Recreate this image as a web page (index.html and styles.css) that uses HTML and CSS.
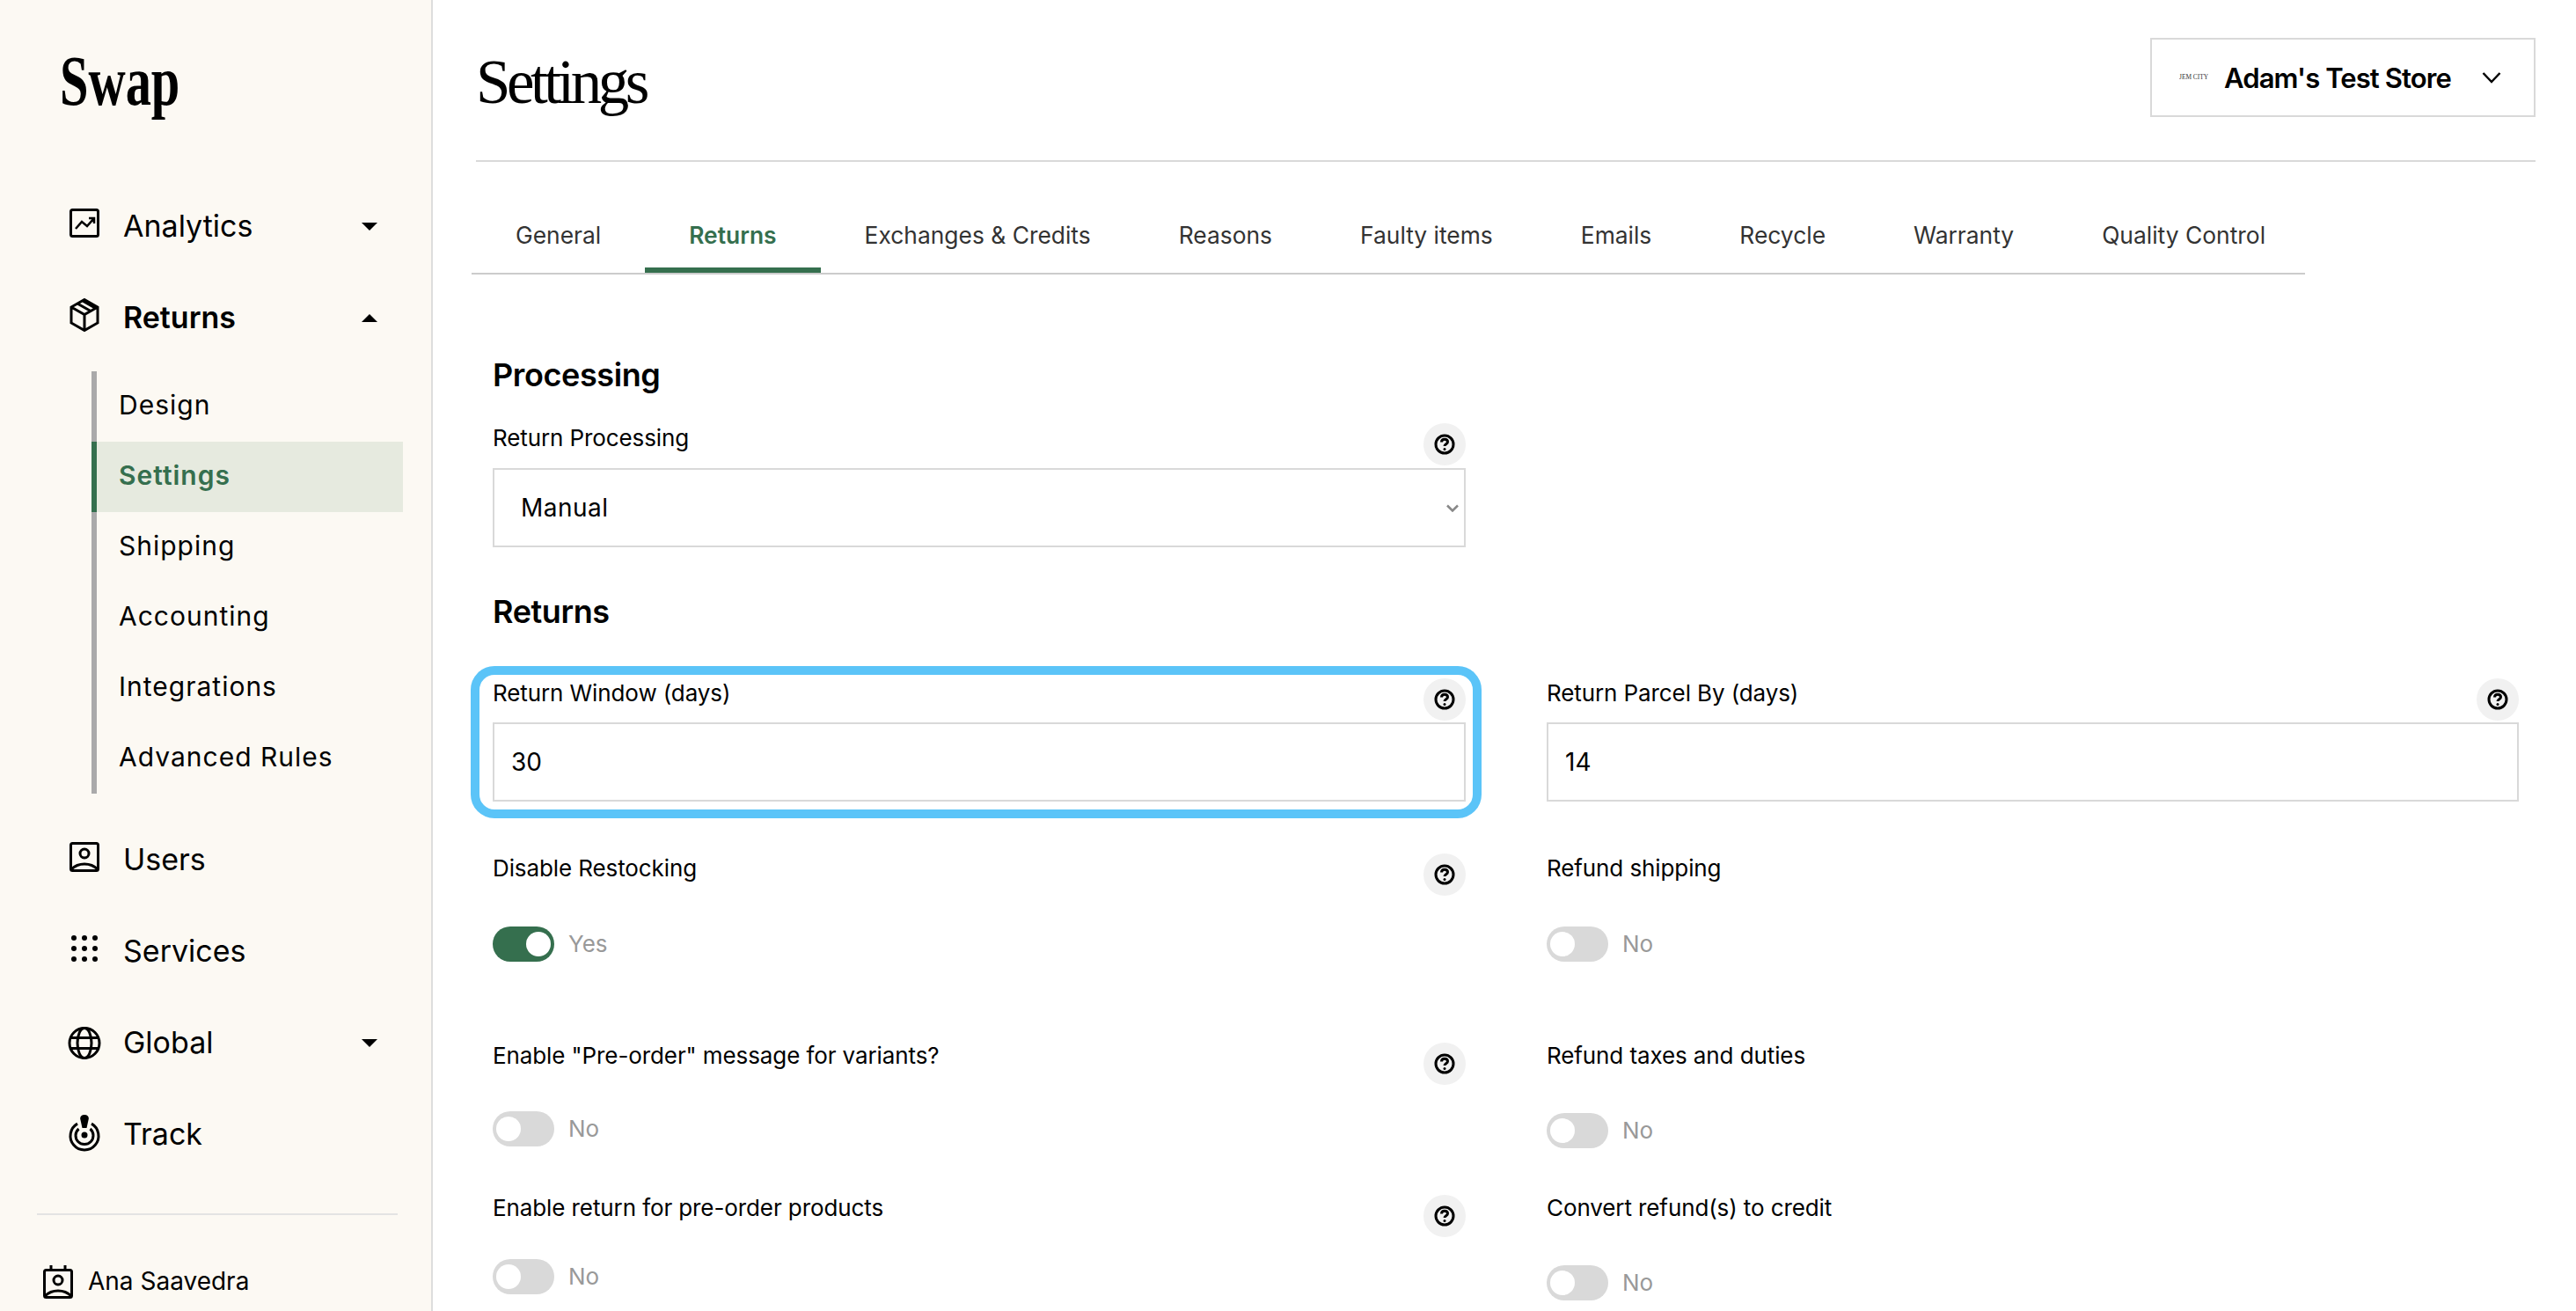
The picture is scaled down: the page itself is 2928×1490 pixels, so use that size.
FILE: index.html
```html
<!DOCTYPE html>
<html lang="en">
<head>
<meta charset="utf-8">
<title>Swap Settings</title>
<link rel="stylesheet" href="styles.css">
</head>
<body>
<div class="app">
  <aside class="sidebar">
    <div class="logo"><span>Swap</span></div>
    <nav class="nav">
      <a class="nav-item">
        <svg class="nav-icon" viewBox="0 0 40 44"><rect x="4.500" y="3.500" width="31" height="30" rx="2"/><path class="thin" d="M10 25l7-8 6 5 8-9M25 13h6v6"/></svg>
        <span class="nav-label">Analytics</span><span class="caret down"></span>
      </a>
      <a class="nav-item">
        <svg class="nav-icon" viewBox="0 0 40 44"><path d="M20 1.500l15 8.500v18l-15 8.500-15-8.500v-18zM5 10l15 8.500 15-8.500M20 18.500v18M12 6l15 8.500M18 3l14 8"/></svg>
        <span class="nav-label strong">Returns</span><span class="caret up"></span>
      </a>
      <div class="subnav">
        <a class="sub-item">Design</a>
        <a class="sub-item active">Settings</a>
        <a class="sub-item">Shipping</a>
        <a class="sub-item">Accounting</a>
        <a class="sub-item">Integrations</a>
        <a class="sub-item">Advanced Rules</a>
      </div>
      <a class="nav-item after-sub">
        <svg class="nav-icon" viewBox="0 0 40 44"><rect x="4.500" y="3.500" width="31" height="31" rx="2"/><circle cx="20" cy="15" r="5"/><path d="M5 33c4-4 9-6 15-6s11 2 15 6"/></svg>
        <span class="nav-label">Users</span>
      </a>
      <a class="nav-item">
        <svg class="nav-icon" viewBox="0 0 40 44"><g class="dots"><circle cx="8" cy="7" r="3"/><circle cx="20" cy="7" r="3"/><circle cx="32" cy="7" r="3"/><circle cx="8" cy="19" r="3"/><circle cx="20" cy="19" r="3"/><circle cx="32" cy="19" r="3"/><circle cx="8" cy="31" r="3"/><circle cx="20" cy="31" r="3"/><circle cx="32" cy="31" r="3"/></g></svg>
        <span class="nav-label">Services</span>
      </a>
      <a class="nav-item">
        <svg class="nav-icon" viewBox="0 0 40 44"><circle cx="20" cy="22.500" r="17"/><ellipse cx="20" cy="22.500" rx="8" ry="17"/><path d="M3.500 16.500h33M3.500 28.500h33"/></svg>
        <span class="nav-label">Global</span><span class="caret down"></span>
      </a>
      <a class="nav-item">
        <svg class="nav-icon" viewBox="0 0 40 44"><path d="M12 10.100A16 16 0 1 0 28 10.100M13.500 16A10 10 0 1 0 26.500 16"/><path class="solid" d="M20 0c3.500 0 5 2 4.800 4.500L22.500 15h-5L15.200 4.500C15 2 16.500 0 20 0z"/><circle class="solid" cx="20" cy="23" r="3.500"/></svg>
        <span class="nav-label">Track</span>
      </a>
    </nav>
    <div class="account">
      <svg class="account-icon" viewBox="0 0 40 44"><path d="M12 4v6M28 4v6"/><rect x="4.500" y="9.500" width="31" height="31" rx="2"/><circle cx="20" cy="21" r="5"/><path d="M5 39c4-4 9-6 15-6s11 2 15 6"/></svg>
      <span>Ana Saavedra</span>
    </div>
  </aside>

  <main class="main">
    <header class="header">
      <h1 class="title">Settings</h1>
      <div class="store">
        <span class="store-logo">JEM CITY</span>
        <span class="store-name">Adam's Test Store</span>
        <svg class="store-chevron" viewBox="0 0 22 14"><path d="M1.500 2l9.500 10 9.500-10"/></svg>
      </div>
    </header>

    <div class="tabs">
      <a class="tab">General</a>
      <a class="tab active">Returns</a>
      <a class="tab">Exchanges &amp; Credits</a>
      <a class="tab">Reasons</a>
      <a class="tab">Faulty items</a>
      <a class="tab">Emails</a>
      <a class="tab">Recycle</a>
      <a class="tab">Warranty</a>
      <a class="tab">Quality Control</a>
    </div>

    <form class="form">
      <h2 class="section first">Processing</h2>
      <div class="grid single">
        <div class="field">
          <div class="field-head">
            <label class="label">Return Processing</label>
            <span class="help"><svg viewBox="0 0 24 24"><circle cx="12" cy="12" r="10"/><path d="M8.500 9.500c0-2 1.500-3.200 3.500-3.200s3.500 1.200 3.500 3c0 2.500-3.500 2.500-3.500 4.700"/><circle class="solid" cx="12" cy="17.500" r="1.500"/></svg></span>
          </div>
          <div class="select-wrap">
            <select class="select"><option>Manual</option></select>
            <svg class="select-chevron" viewBox="0 0 14 9"><path d="M1 1.500l6 6 6-6"/></svg>
          </div>
        </div>
      </div>

      <h2 class="section">Returns</h2>
      <div class="grid">
        <div class="field">
          <div class="field-head">
            <label class="label">Return Window (days)</label>
            <span class="help"><svg viewBox="0 0 24 24"><circle cx="12" cy="12" r="10"/><path d="M8.500 9.500c0-2 1.500-3.200 3.500-3.200s3.500 1.200 3.500 3c0 2.500-3.500 2.500-3.500 4.700"/><circle class="solid" cx="12" cy="17.500" r="1.500"/></svg></span>
          </div>
          <input class="input" value="30">
          <div class="highlight"></div>
        </div>
        <div class="field">
          <div class="field-head">
            <label class="label">Return Parcel By (days)</label>
            <span class="help"><svg viewBox="0 0 24 24"><circle cx="12" cy="12" r="10"/><path d="M8.500 9.500c0-2 1.500-3.200 3.500-3.200s3.500 1.200 3.500 3c0 2.500-3.500 2.500-3.500 4.700"/><circle class="solid" cx="12" cy="17.500" r="1.500"/></svg></span>
          </div>
          <input class="input" value="14">
        </div>

        <div class="field">
          <div class="field-head">
            <label class="label">Disable Restocking</label>
            <span class="help"><svg viewBox="0 0 24 24"><circle cx="12" cy="12" r="10"/><path d="M8.500 9.500c0-2 1.500-3.200 3.500-3.200s3.500 1.200 3.500 3c0 2.500-3.500 2.500-3.500 4.700"/><circle class="solid" cx="12" cy="17.500" r="1.500"/></svg></span>
          </div>
          <div class="toggle-row"><span class="toggle on"><span class="knob"></span></span><span class="toggle-text">Yes</span></div>
        </div>
        <div class="field">
          <div class="field-head"><label class="label">Refund shipping</label></div>
          <div class="toggle-row"><span class="toggle"><span class="knob"></span></span><span class="toggle-text">No</span></div>
        </div>

        <div class="field">
          <div class="field-head">
            <label class="label">Enable "Pre-order" message for variants?</label>
            <span class="help low"><svg viewBox="0 0 24 24"><circle cx="12" cy="12" r="10"/><path d="M8.500 9.500c0-2 1.500-3.200 3.500-3.200s3.500 1.200 3.500 3c0 2.500-3.500 2.500-3.500 4.700"/><circle class="solid" cx="12" cy="17.500" r="1.500"/></svg></span>
          </div>
          <div class="toggle-row gap-30"><span class="toggle"><span class="knob"></span></span><span class="toggle-text">No</span></div>
        </div>
        <div class="field">
          <div class="field-head"><label class="label">Refund taxes and duties</label></div>
          <div class="toggle-row gap-32"><span class="toggle"><span class="knob"></span></span><span class="toggle-text">No</span></div>
        </div>

        <div class="field">
          <div class="field-head">
            <label class="label">Enable return for pre-order products</label>
            <span class="help low"><svg viewBox="0 0 24 24"><circle cx="12" cy="12" r="10"/><path d="M8.500 9.500c0-2 1.500-3.200 3.500-3.200s3.500 1.200 3.500 3c0 2.500-3.500 2.500-3.500 4.700"/><circle class="solid" cx="12" cy="17.500" r="1.500"/></svg></span>
          </div>
          <div class="toggle-row gap-25"><span class="toggle"><span class="knob"></span></span><span class="toggle-text">No</span></div>
        </div>
        <div class="field">
          <div class="field-head"><label class="label">Convert refund(s) to credit</label></div>
          <div class="toggle-row gap-32"><span class="toggle"><span class="knob"></span></span><span class="toggle-text">No</span></div>
        </div>
      </div>
    </form>
  </main>
</div>
</body>
</html>
```

FILE: styles.css
```css
* { box-sizing: border-box; }
html, body { margin: 0; height: 100%; }
body {
  font-family: Inter, "Liberation Sans", sans-serif;
  color: #000;
  background: #fff;
  overflow: hidden;
}
svg { display: block; fill: none; stroke: #000; stroke-width: 3; }
svg .solid { fill: #000; stroke: none; }
svg .thin { stroke-width: 2.500; }
svg .dots circle { fill: #000; stroke: none; }

.app { display: flex; height: 1490px; overflow: hidden; }

/* Sidebar */
.sidebar {
  width: 492px;
  flex: none;
  background: #fcf9f3;
  border-right: 2px solid #ddd;
  display: flex;
  flex-direction: column;
  height: 1490px;
}
.logo {
  height: 205px;
  padding: 46px 0 0 68px;
  font-family: "Liberation Serif", serif;
  font-size: 80px;
  line-height: 92px;
  font-weight: 700;
}
.logo span { display: inline-block; transform: scaleX(.73); transform-origin: left center; }
.nav { display: flex; flex-direction: column; }
.nav-item {
  display: flex;
  align-items: center;
  height: 104px;
  padding: 0 61px 0 76px;
}
.nav-icon { width: 40px; height: 44px; margin-right: 24px; flex: none; }
.nav-label { flex: 1; font-size: 34px; line-height: 44px; }
.nav-label.strong { font-weight: 600; }
.caret { width: 0; height: 0; border-left: 9px solid transparent; border-right: 9px solid transparent; }
.caret.down { border-top: 9px solid #000; }
.caret.up { border-bottom: 9px solid #000; }
.subnav {
  margin: 9px 0 0 104px;
  width: 354px;
  height: 480px;
  border-left: 6px solid #aaa;
}
.sub-item {
  display: flex;
  align-items: center;
  height: 80px;
  padding: 0 0 4px 25px;
  margin-left: -6px;
  border-left: 6px solid transparent;
  font-size: 30px;
  letter-spacing: 1px;
}
.sub-item.active {
  background: #e6eadf;
  border-left-color: #356f4e;
  color: #356f4e;
  font-weight: 600;
}
.after-sub { margin-top: 23px; }
.account {
  margin: 38px 0 0 42px;
  width: 410px;
  border-top: 2px solid #e3e3e3;
  padding: 53px 0 0 4px;
  display: flex;
  align-items: center;
  font-size: 28px;
  line-height: 40px;
}
.account-icon { width: 40px; height: 44px; margin-right: 14px; flex: none; }

/* Main */
.main { flex: 1; padding: 0 46px 0 44px; min-width: 0; }
.header {
  display: flex;
  justify-content: space-between;
  align-items: flex-start;
  margin-left: 5px;
  height: 184px;
  padding-top: 43px;
  border-bottom: 2px solid #d9d9d9;
}
.title {
  margin: 12px 0 0;
  font-family: "Liberation Serif", serif;
  font-weight: 400;
  font-size: 71px;
  line-height: 76px;
  letter-spacing: -4.500px;
}
.store {
  width: 438px;
  height: 90px;
  border: 2px solid #d9d9d9;
  display: flex;
  align-items: center;
  padding-left: 31px;
}
.store-logo {
  width: 33px;
  margin-right: 18px;
  font-family: "Liberation Serif", serif;
  font-size: 7.400px;
  line-height: 10px;
  color: #333;
  white-space: nowrap;
  overflow: hidden;
}
.store-name { font-size: 31px; font-weight: 600; letter-spacing: -.9px; white-space: nowrap; flex: 1; }
.store-chevron { width: 22px; height: 14px; margin-right: 37px; stroke-width: 2.500; flex: none; }

.tabs {
  display: flex;
  width: 2084px;
  padding-top: 40px;
  border-bottom: 2px solid #ccc;
}
.tab {
  padding: 26px 50px 20px;
  border-bottom: 6px solid transparent;
  font-size: 26.400px;
  line-height: 34px;
  color: #333;
  white-space: nowrap;
}
.tab.active { border-bottom-color: #356f4e; color: #356f4e; font-weight: 600; }

.form { padding-left: 24px; }
.section {
  margin: 49px 0 52px;
  font-size: 36px;
  line-height: 48px;
  font-weight: 600;
  letter-spacing: -.4px;
}
.section.first { margin: 90px 0 31px; }
.grid {
  display: grid;
  grid-template-columns: 1106px 1105px;
  grid-template-rows: 199px 213px 173px auto;
  column-gap: 92px;
}
.grid.single { display: block; width: 1106px; }
.field { position: relative; min-width: 0; }
.field-head {
  display: flex;
  justify-content: space-between;
  align-items: flex-start;
  height: 50px;
}
.label { font-size: 26px; line-height: 34px; letter-spacing: -.1px; white-space: nowrap; }
.help {
  width: 48px;
  height: 48px;
  border-radius: 50%;
  background: #f1f1f1;
  display: flex;
  align-items: center;
  justify-content: center;
  flex: none;
}
.help.low { margin-top: 2px; }
.help svg { width: 24px; height: 24px; }
.input, .select {
  display: block;
  width: 100%;
  height: 90px;
  border: 2px solid #d9d9d9;
  border-radius: 0;
  background: #fff;
  font-family: inherit;
  font-size: 28px;
  color: #000;
  outline: none;
}
.input { padding: 0 0 0 19px; }
.select { appearance: none; padding: 0 0 0 30px; letter-spacing: .5px; }
.select-wrap { position: relative; margin-top: 1px; }
.select-chevron {
  position: absolute;
  top: 41px;
  right: 8px;
  width: 14px;
  height: 9px;
  stroke: #888;
  stroke-width: 2.500;
}
.highlight {
  position: absolute;
  top: -14px;
  left: -25px;
  right: -18px;
  height: 173px;
  border: 10px solid #5bc4f8;
  border-radius: 27px;
  pointer-events: none;
}
.toggle-row { display: flex; align-items: center; gap: 16px; margin-top: 33px; }
.toggle-row.gap-30 { margin-top: 30px; }
.toggle-row.gap-32 { margin-top: 32px; }
.toggle-row.gap-25 { margin-top: 25px; }
.toggle {
  width: 70px;
  height: 40px;
  border-radius: 20px;
  background: #d9d9d9;
  padding: 6px 4px;
  display: flex;
  flex: none;
}
.toggle.on { background: #356f4e; justify-content: flex-end; }
.knob { width: 28px; height: 28px; border-radius: 50%; background: #fff; }
.toggle-text { font-size: 26px; line-height: 34px; color: #999; }
```
